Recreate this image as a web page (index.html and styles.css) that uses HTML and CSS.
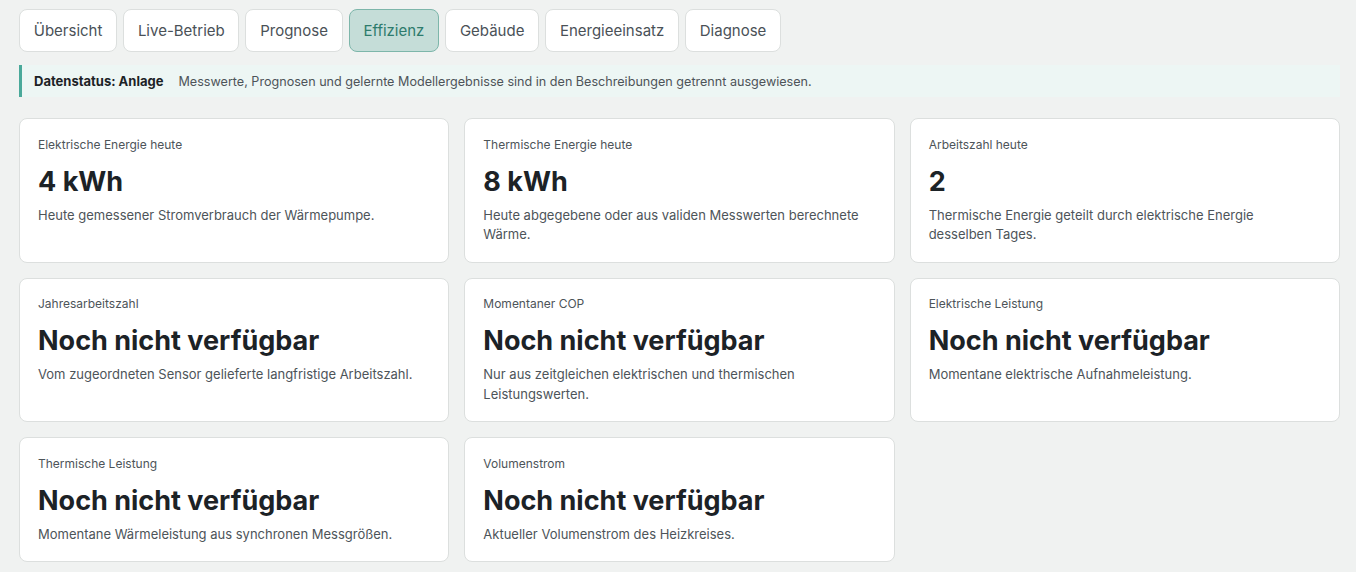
FILE: index.html
```html
<!DOCTYPE html>
<html lang="de">
<head>
    <meta charset="UTF-8">
    <meta name="viewport" content="width=device-width, initial-scale=1.0">
    <title>Effizienz</title>
    <link rel="stylesheet" href="styles.css">
</head>
<body>
    <div class="page">
        <nav class="tabs">
            <button class="tab">Übersicht</button>
            <button class="tab">Live-Betrieb</button>
            <button class="tab">Prognose</button>
            <button class="tab active">Effizienz</button>
            <button class="tab">Gebäude</button>
            <button class="tab">Energieeinsatz</button>
            <button class="tab">Diagnose</button>
        </nav>

        <div class="notice">
            <strong>Datenstatus: Anlage</strong>
            <span>Messwerte, Prognosen und gelernte Modellergebnisse sind in den Beschreibungen getrennt ausgewiesen.</span>
        </div>

        <div class="cards">
            <div class="card">
                <div class="card-label">Elektrische Energie heute</div>
                <div class="card-value">4 kWh</div>
                <p class="card-desc">Heute gemessener Stromverbrauch der Wärmepumpe.</p>
            </div>
            <div class="card">
                <div class="card-label">Thermische Energie heute</div>
                <div class="card-value">8 kWh</div>
                <p class="card-desc">Heute abgegebene oder aus validen Messwerten berechnete Wärme.</p>
            </div>
            <div class="card">
                <div class="card-label">Arbeitszahl heute</div>
                <div class="card-value">2</div>
                <p class="card-desc">Thermische Energie geteilt durch elektrische Energie desselben Tages.</p>
            </div>
            <div class="card">
                <div class="card-label">Jahresarbeitszahl</div>
                <div class="card-value">Noch nicht verfügbar</div>
                <p class="card-desc">Vom zugeordneten Sensor gelieferte langfristige Arbeitszahl.</p>
            </div>
            <div class="card">
                <div class="card-label">Momentaner COP</div>
                <div class="card-value">Noch nicht verfügbar</div>
                <p class="card-desc">Nur aus zeitgleichen elektrischen und thermischen Leistungswerten.</p>
            </div>
            <div class="card">
                <div class="card-label">Elektrische Leistung</div>
                <div class="card-value">Noch nicht verfügbar</div>
                <p class="card-desc">Momentane elektrische Aufnahmeleistung.</p>
            </div>
            <div class="card">
                <div class="card-label">Thermische Leistung</div>
                <div class="card-value">Noch nicht verfügbar</div>
                <p class="card-desc">Momentane Wärmeleistung aus synchronen Messgrößen.</p>
            </div>
            <div class="card">
                <div class="card-label">Volumenstrom</div>
                <div class="card-value">Noch nicht verfügbar</div>
                <p class="card-desc">Aktueller Volumenstrom des Heizkreises.</p>
            </div>
        </div>
    </div>
</body>
</html>
```

FILE: styles.css
```css
body {
    margin: 0;
    background: #f0f2f1;
    font-family: Inter, 'Noto Sans', sans-serif;
    color: #1c2226;
}
.page {
    padding: 9px 16px 12px 19px;
}
.tabs {
    display: flex;
    gap: 6px;
}
.tab {
    font-family: inherit;
    font-size: 15px;
    height: 43px;
    padding: 0 13.75px;
    background: #fff;
    color: #4a5157;
    border: 1px solid #dcdfde;
    border-radius: 8px;
    cursor: pointer;
}
.tab.active {
    background: #c5ddd8;
    border-color: #7db6aa;
    color: #2e7b6c;
}
.notice {
    margin-top: 13px;
    display: flex;
    align-items: center;
    gap: 15px;
    height: 32px;
    padding: 0 12px;
    background: #edf6f4;
    border-left: 3px solid #4aa99a;
    font-size: 12.6px;
    color: #4d5459;
}
.notice strong {
    font-size: 13px;
    color: #1c2226;
}
.cards {
    margin-top: 21px;
    display: grid;
    grid-template-columns: repeat(3, 1fr);
    gap: 15px;
}
.card {
    background: #fff;
    border: 1px solid #dcdfde;
    border-radius: 8px;
    padding: 17.5px 24px 17px 18px;
}
.card-label {
    font-size: 12px;
    line-height: 16px;
    color: #4d5459;
}
.card-value {
    margin-top: 12px;
    font-size: 27px;
    line-height: 34px;
    font-weight: 700;
    color: #1c2226;
}
.card-desc {
    margin: 7px 0 0;
    font-size: 13px;
    line-height: 19.5px;
    color: #4d5459;
}
```
